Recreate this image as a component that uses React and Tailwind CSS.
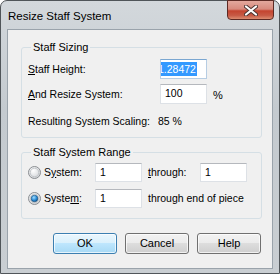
function Radio({ checked }) {
  return (
    <svg width="13" height="13" viewBox="0 0 13 13" className="shrink-0">
      <defs>
        <radialGradient id="rfill" cx="0.4" cy="0.35" r="0.7">
          <stop offset="0" stopColor="#ffffff" />
          <stop offset="1" stopColor="#cfd2d6" />
        </radialGradient>
        <radialGradient id="rdot" cx="0.4" cy="0.35" r="0.7">
          <stop offset="0" stopColor="#9edcff" />
          <stop offset="0.6" stopColor="#2a8ad4" />
          <stop offset="1" stopColor="#0b4c86" />
        </radialGradient>
      </defs>
      <circle cx="6.5" cy="6.5" r="6" fill="url(#rfill)" stroke="#8b8e92" />
      <circle cx="6.5" cy="6.5" r="4.3" fill="none" stroke="#b9bcc0" strokeWidth="0.8" />
      {checked && <circle cx="6.5" cy="6.5" r="3.3" fill="url(#rdot)" stroke="#1a4f7a" strokeWidth="0.6" />}
    </svg>
  );
}

function Box({ children, focused, wide }) {
  return (
    <div
      className={`flex items-center bg-white border pl-[4px] text-[10.5px] text-black overflow-hidden ${
        wide ? 'w-[47px] h-[20px]' : 'w-[47px] h-[19px]'
      } ${focused ? 'border-[#b7cde3] border-t-[#7ba7d1]' : 'border-[#dde1e6] border-t-[#b5b8bd]'}`}
    >
      {children}
    </div>
  );
}

function Button({ children, primary }) {
  return (
    <button
      className={`w-[64px] h-[21px] rounded-[3px] border text-[11px] text-black shadow-[inset_0_0_0_1px_rgba(255,255,255,0.7)] ${
        primary
          ? 'border-[#3c7fb1] bg-[linear-gradient(#eaf6fd_0%,#d9f0fc_50%,#bee6fd_50%,#a7d9f5_100%)]'
          : 'border-[#707070] bg-[linear-gradient(#f2f2f2_0%,#ebebeb_50%,#dddddd_50%,#cfcfcf_100%)]'
      }`}
    >
      {children}
    </button>
  );
}

export default function App() {
  return (
    <div className="w-[280px] h-[274px] overflow-hidden font-['Liberation_Sans',Arial,sans-serif]">
      <div className="w-[280px] h-[274px] rounded-t-[7px] border border-[#505559] bg-[linear-gradient(180deg,#d3d8dc_0%,#c4cacf_40%,#c9ced2_100%)] flex flex-col">
        <div className="h-[28px] flex items-start justify-between">
          <span className="pl-[7px] pt-[8px] text-[11.5px] leading-[14px] text-black">Resize Staff System</span>
          <div className="mr-[5px] -mt-[1px] w-[47px] h-[20px] rounded-b-[4px] border border-[#5c2a24] bg-[linear-gradient(#e3a89d_0%,#d88a7d_45%,#c4442f_55%,#c75a45_80%,#dc8c70_100%)] flex items-center justify-center">
            <svg width="14" height="11" viewBox="0 0 14 11">
              <path d="M2 1.5 L12 9.5 M12 1.5 L2 9.5" stroke="#4a3330" strokeWidth="4" strokeLinecap="round" />
              <path d="M2 1.5 L12 9.5 M12 1.5 L2 9.5" stroke="#ffffff" strokeWidth="2.2" strokeLinecap="round" />
            </svg>
          </div>
        </div>

        <div className="mx-[6px] h-[240px] border border-[#9aa3ab] bg-[#f0f0f0] pl-[13px] pr-[10px] pt-[10px] text-[10.5px] text-black">
          <fieldset className="border border-[#d5dfe5] rounded-[3px] pl-[6px] pb-[5px]">
            <legend className="ml-[3px] px-[2px] leading-[14px] text-[11px]">Staff Sizing</legend>
            <div className="pt-[5px] flex flex-col">
              <div className="flex items-center h-[20px]">
                <span className="w-[132px] pt-[2px]">
                  <span className="underline">S</span>taff Height:
                </span>
                <Box focused wide>
                  <div className="-ml-[7px] bg-[#3399ff] text-white leading-[14px] pr-[1px]">1.28472</div>
                </Box>
              </div>
              <div className="flex items-center h-[20px] mt-[5px]">
                <span className="w-[132px] pt-[2px]">
                  <span className="underline">A</span>nd Resize System:
                </span>
                <Box wide>100</Box>
                <span className="ml-[6px] pt-[2px] text-[11px]">%</span>
              </div>
              <div className="flex items-center h-[20px] mt-[8px]">
                <span className="w-[130px]">Resulting System Scaling:</span>
                <span>85 %</span>
              </div>
            </div>
          </fieldset>

          <fieldset className="mt-[7px] border border-[#d5dfe5] rounded-[3px] pl-[6px] pb-[10px]">
            <legend className="ml-[3px] px-[2px] leading-[14px] text-[11px]">Staff System Range</legend>
            <div className="pt-[4px] flex flex-col">
              <div className="flex items-center h-[19px]">
                <div className="w-[67px] flex items-center gap-[3px]">
                  <Radio />
                  <span>
                    S<span className="underline">y</span>stem:
                  </span>
                </div>
                <Box>1</Box>
                <span className="ml-[6px] w-[52px]">
                  <span className="underline">t</span>hrough:
                </span>
                <Box>1</Box>
              </div>
              <div className="flex items-center h-[19px] mt-[7px]">
                <div className="w-[67px] flex items-center gap-[3px]">
                  <Radio checked />
                  <span>
                    Syste<span className="underline">m</span>:
                  </span>
                </div>
                <Box>1</Box>
                <span className="ml-[6px]">through end of piece</span>
              </div>
            </div>
          </fieldset>

          <div className="mt-[14px] flex justify-end gap-[8px] pr-[1px]">
            <Button primary>OK</Button>
            <Button>Cancel</Button>
            <Button>Help</Button>
          </div>
        </div>
      </div>
    </div>
  );
}
